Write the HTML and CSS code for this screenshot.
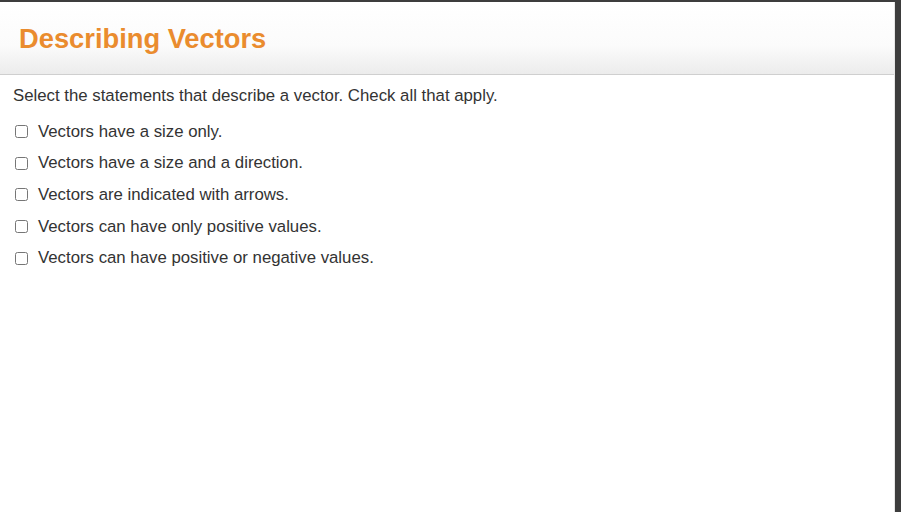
FILE: index.html
```html
<!DOCTYPE html>
<html>
<head>
<meta charset="utf-8">
<link rel="stylesheet" href="styles.css">
</head>
<body>
<div class="panel">
  <header class="header">
    <h1 class="title">Describing Vectors</h1>
  </header>
  <main class="content">
    <p class="prompt">Select the statements that describe a vector. Check all that apply.</p>
    <ul class="options">
      <li class="option"><input type="checkbox" class="box"><span class="label">Vectors have a size only.</span></li>
      <li class="option"><input type="checkbox" class="box"><span class="label">Vectors have a size and a direction.</span></li>
      <li class="option"><input type="checkbox" class="box"><span class="label">Vectors are indicated with arrows.</span></li>
      <li class="option"><input type="checkbox" class="box"><span class="label">Vectors can have only positive values.</span></li>
      <li class="option"><input type="checkbox" class="box"><span class="label">Vectors can have positive or negative values.</span></li>
    </ul>
  </main>
</div>
</body>
</html>
```

FILE: styles.css
```css
html, body {
  margin: 0;
  padding: 0;
  height: 100%;
}
body {
  background: #3d3d3d;
  font-family: "Liberation Sans", Arial, sans-serif;
  overflow: hidden;
}
.panel {
  margin: 2px 6px 0 0;
  background: #fff;
  height: 510px;
  border-right: 1px solid #e6e6e6;
}
.header {
  height: 72px;
  background: linear-gradient(to bottom, #ffffff 0%, #fbfbfb 60%, #ececec 100%);
  border-bottom: 1px solid #cfcfcf;
  display: flex;
  align-items: center;
  padding-left: 19px;
}
.title {
  margin: 2px 0 0 0;
  font-size: 27.3px;
  font-weight: bold;
  color: #ea8c2e;
}
.content {
  padding: 11px 13px;
  color: #333;
  font-size: 16.8px;
}
.prompt {
  margin: 0 0 16px 0;
  line-height: 20px;
}
.options {
  list-style: none;
  margin: 0;
  padding: 0;
  display: flex;
  flex-direction: column;
  gap: 12.7px;
}
.option {
  display: flex;
  align-items: center;
  height: 19px;
}
.box {
  margin: 0 0 0 2px;
  width: 13px;
  height: 13px;
}
.label {
  margin-left: 10px;
}
```
